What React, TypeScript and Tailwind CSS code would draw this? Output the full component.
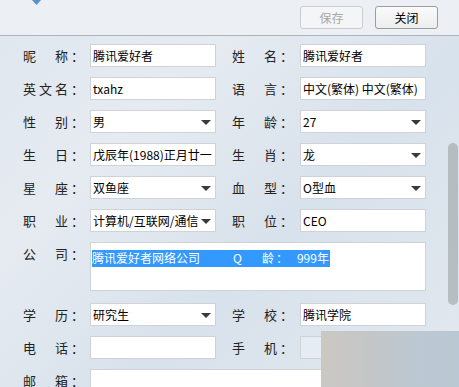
import React from "react";

const font = { fontFamily: '"Microsoft YaHei", "Noto Sans CJK SC", "Noto Sans", sans-serif' };

function Label({ chars }: { chars: string[] }) {
  return (
    <div className="flex items-center h-[23px] text-[13px] text-[#222]">
      <div className="flex justify-between w-[45px]">
        {chars.map((c, i) => (
          <span key={i}>{c}</span>
        ))}
      </div>
      <span className="ml-[3px]">：</span>
    </div>
  );
}

function Arrow() {
  return (
    <svg width="10" height="6" viewBox="0 0 10 6" className="absolute right-[4px] top-[9px]">
      <path d="M0 0 L10 0 L5 5 Z" fill="#3a3a3a" />
    </svg>
  );
}

function Field({ value, select, tint }: { value?: string; select?: boolean; tint?: boolean }) {
  return (
    <div
      className={`relative h-[23px] w-[126px] border border-[#cfd3d8] ${tint ? "bg-[#e5ecf3]" : "bg-white"} text-[12px] text-black leading-[21px] pl-[2px] whitespace-nowrap overflow-hidden`}
    >
      {value}
      {select && <Arrow />}
    </div>
  );
}

function Row({
  l,
  lv,
  ls,
  r,
  rv,
  rs,
  rt,
}: {
  l: string[];
  lv?: string;
  ls?: boolean;
  r: string[];
  rv?: string;
  rs?: boolean;
  rt?: boolean;
}) {
  return (
    <div className="flex items-center h-[23px]">
      <div className="w-[67px]">
        <Label chars={l} />
      </div>
      <Field value={lv} select={ls} />
      <div className="w-[16px]" />
      <div className="w-[68px]">
        <Label chars={r} />
      </div>
      <Field value={rv} select={rs} tint={rt} />
    </div>
  );
}

export default function App() {
  return (
    <div
      className="relative w-[459px] h-[387px] overflow-hidden bg-[linear-gradient(135deg,#dfe6ee_0%,#e6ebf1_30%,#d8e2ec_60%,#e2e8ee_100%)]"
      style={font}
    >
      {/* header */}
      <div className="relative h-[36px] border-b border-[#aeb3b9] bg-[#eceff3] flex items-center justify-end gap-[12px] pr-[21px]">
        <svg width="9" height="5" viewBox="0 0 9 5" className="absolute left-[32px] top-0">
          <path d="M0 0 L9 0 L4.5 5 Z" fill="#5b8fc9" />
        </svg>
        <div className="w-[63px] h-[23px] rounded-[3px] border border-[#c9ccd0] bg-[#f4f5f6] text-[12px] text-[#a8a8a8] flex items-center justify-center">
          保存
        </div>
        <div className="w-[63px] h-[23px] rounded-[3px] border border-[#9a9ea3] bg-[linear-gradient(#fbfbfb,#eceded)] text-[12px] text-black flex items-center justify-center">
          关闭
        </div>
      </div>

      {/* form */}
      <div className="pl-[23px] pt-[8px] flex flex-col gap-[10px]">
        <Row l={["昵", "称"]} lv="腾讯爱好者" r={["姓", "名"]} rv="腾讯爱好者" />
        <Row l={["英", "文", "名"]} lv="txahz" r={["语", "言"]} rv="中文(繁体)  中文(繁体)" />
        <Row l={["性", "别"]} lv="男" ls r={["年", "龄"]} rv="27" rs />
        <Row l={["生", "日"]} lv="戊辰年(1988)正月廿一" r={["生", "肖"]} rv="龙" rs />
        <Row l={["星", "座"]} lv="双鱼座" ls r={["血", "型"]} rv="O型血" rs />
        <Row l={["职", "业"]} lv="计算机/互联网/通信" ls r={["职", "位"]} rv="CEO" />
        <div className="flex items-start h-[49px]">
          <div className="w-[67px]">
            <Label chars={["公", "司"]} />
          </div>
          <div className="h-[49px] w-[336px] border border-[#cfd3d8] bg-white pl-[1px] pt-[1px]">
            <div className="inline-flex items-center h-[17px] bg-[#3399ff] text-white text-[12px] whitespace-nowrap pr-[1px]">
              <span className="w-[108px]">腾讯爱好者网络公司</span>
              <span className="ml-[33px]">Q</span>
              <span className="ml-[20px]">龄</span>
              <span className="ml-[2px]">：</span>
              <span className="ml-[9px]">999年</span>
            </div>
          </div>
        </div>
        <div className="h-[2px]" />
        <div className="-mt-[10px] flex flex-col gap-[10px]">
          <Row l={["学", "历"]} lv="研究生" ls r={["学", "校"]} rv="腾讯学院" />
          <Row l={["电", "话"]} r={["手", "机"]} rt />
          <div className="flex items-center h-[23px]">
            <div className="w-[67px]">
              <Label chars={["邮", "箱"]} />
            </div>
            <div className="h-[23px] w-[336px] border border-[#cfd3d8] bg-white" />
          </div>
        </div>
      </div>

      {/* scrollbar */}
      <div className="absolute left-[448px] top-[143px] w-[10px] h-[162px] rounded-[5px] bg-[#aeb2b8]/80" />

      {/* blurred overlay */}
      <div className="absolute left-[321px] top-[331px] w-[138px] h-[56px] bg-[linear-gradient(90deg,#cbc8c4_0%,#c4c6c6_35%,#bcc8d2_70%,#b9c8d4_100%)]" />
    </div>
  );
}
